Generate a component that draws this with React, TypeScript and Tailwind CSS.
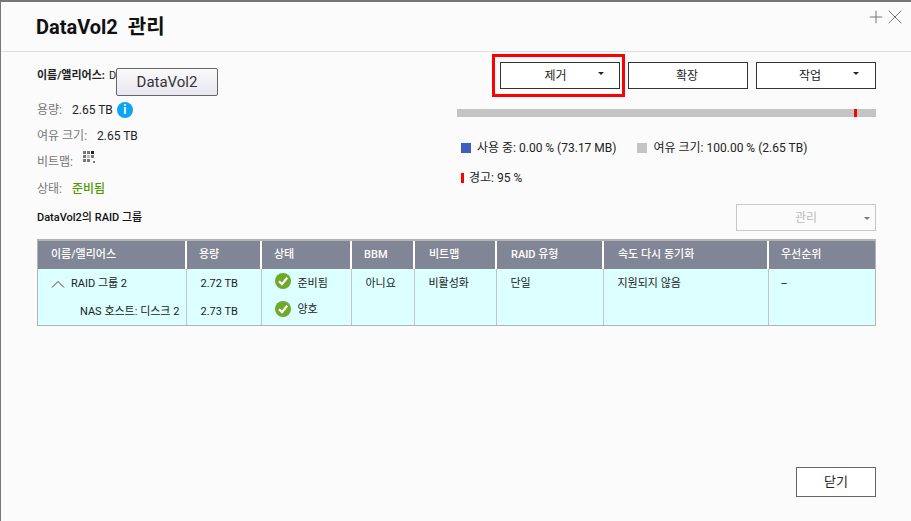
import { Plus, X } from 'lucide-react';

const font = { fontFamily: 'Roboto, "Noto Sans CJK KR", sans-serif' };

function Caret({ className = 'border-t-[#222]' }: { className?: string }) {
  return <span className={`inline-block w-0 h-0 border-x-[3px] border-x-transparent border-t-[3px] ${className}`} />;
}

function CheckIcon({ className }: { className: string }) {
  return (
    <svg width="16" height="16" viewBox="0 0 16 16" className={`shrink-0 ${className}`}>
      <circle cx="8" cy="8" r="8" fill="#6fa92a" />
      <path d="M4 8.2 L7 11.2 L12.2 4.8" fill="none" stroke="#fff" strokeWidth="2.2" />
    </svg>
  );
}

function BitmapIcon() {
  return (
    <svg width="13" height="13" viewBox="0 0 13 13">
      <g fill="#777">
        <rect x="0" y="0" width="3" height="3" />
        <rect x="4" y="0" width="3" height="3" />
        <rect x="0" y="4" width="3" height="3" />
        <rect x="0" y="8" width="3" height="3" />
        <rect x="4" y="8" width="3" height="3" />
        <rect x="8" y="4" width="3" height="3" />
        <rect x="10" y="10" width="2" height="2" />
      </g>
      <rect x="8" y="0" width="3" height="3" fill="#222" />
      <rect x="4" y="4" width="3" height="3" fill="#bbb" />
    </svg>
  );
}

function Info({ label, value, top }: { label: string; value: React.ReactNode; top: string }) {
  return (
    <div className={`flex items-center h-[26px] ${top}`}>
      <span className="text-[#777] mr-2.5">{label}</span>
      {value}
    </div>
  );
}

const headers = [
  ['이름/앨리어스', 'w-[148px] pl-[13px]'],
  ['용량', 'w-[75px] pl-[12px]'],
  ['상태', 'w-[90px] pl-[12px]'],
  ['BBM', 'w-[63px] pl-[12px]'],
  ['비트맵', 'w-[82px] pl-[14px]'],
  ['RAID 유형', 'w-[107px] pl-[14px]'],
  ['속도 다시 동기화', 'w-[165px] pl-[14px]'],
  ['우선순위', 'pl-[12px]'],
];

export default function App() {
  return (
    <div style={font} className="w-[911px] h-[521px] flex flex-col bg-[#fbfbfb] border-t-2 border-l border-[#777] text-[11px] text-[#222] overflow-hidden">
      {/* 헤더 */}
      <div className="h-[50px] shrink-0 border-b border-[#ddd] flex justify-between pl-[35px] pr-[4px]">
        <h1 className="text-[20px] leading-[28px] font-bold text-[#111] pt-[11px] h-full whitespace-pre">DataVol2  관리</h1>
        <div className="flex items-center h-[29px] text-[#777]">
          <Plus size={20} strokeWidth={1.2} />
          <X size={24} strokeWidth={1} className="-ml-[3px]" />
        </div>
      </div>

      <div className="flex pl-[36px] pr-[35px]">
        {/* 왼쪽 정보 */}
        <div className="w-[420px] pt-[12px] text-[12px] relative">
          <div className="flex items-center h-[24px] text-[11px]">
            <span className="font-bold text-[11px]">이름/앨리어스:</span>
            <span className="ml-[4px]">D</span>
            <div className="absolute left-[79px] top-[16px] w-[102px] h-[28px] flex items-center justify-center rounded-[2px] border border-[#666] bg-linear-to-b from-[#fafafa] to-[#e8e6f0] text-[15px] text-[#333]">
              DataVol2
            </div>
          </div>
          <Info top="mt-[9px]" label="용량:" value={<span className="flex items-center gap-[4px] text-[12px]">2.65 TB <span className="w-4 h-4 rounded-full bg-[#0aa5f5] text-white text-[12px] font-bold flex items-center justify-center">i</span></span>} />
          <Info top="" label="여유 크기:" value={<span>2.65 TB</span>} />
          <Info top="" label="비트맵:" value={<span className="-mt-[10px]"><BitmapIcon /></span>} />
          <Info top="mt-[1px]" label="상태:" value={<span className="text-[#4f9a00] font-medium">준비됨</span>} />
        </div>

        {/* 오른쪽 사용량 */}
        <div className="w-[419px] flex flex-col pt-[2px]">
          <div className="flex justify-end items-center h-[43px]">
            <div className="border-[3px] border-[#f00] p-[5px] pl-[5px] pr-[2px] -mr-[5px] flex">
              <button className="relative w-[120px] h-[27px] bg-white border border-[#333] text-[12px] pr-[9px]">
                제거
                <span className="absolute right-[15px] top-[9px] flex"><Caret /></span>
              </button>
            </div>
            <button className="ml-[8px] w-[120px] h-[27px] bg-white border border-[#333] text-[12px] pr-[2px]">확장</button>
            <button className="relative ml-[8px] w-[120px] h-[27px] bg-white border border-[#333] text-[12px] pr-[12px]">
              작업
              <span className="absolute right-[16px] top-[9px] flex"><Caret /></span>
            </button>
          </div>
          <div className="relative h-[8px] mt-[12px] bg-[#c4c4c4]">
            <div className="absolute left-[397px] top-0 w-[3px] h-full bg-[#f00]" />
          </div>
          <div className="flex items-center mt-[23px] h-[16px] pl-[4px] text-[12px]">
            <span className="w-[10px] h-[10px] bg-[#3f5fbf] mr-[6px]" />
            <span>사용 중: 0.00 % (73.17 MB)</span>
            <span className="w-[10px] h-[10px] bg-[#c4c4c4] ml-[21px] mr-[6px]" />
            <span>여유 크기: 100.00 % (2.65 TB)</span>
          </div>
          <div className="flex items-center mt-[14px] h-[16px] pl-[4px] text-[12px]">
            <span className="w-[3px] h-[10px] bg-[#f00] mr-[5px]" />
            <span>경고: 95 %</span>
          </div>
        </div>
      </div>

      <div className="flex items-end justify-between pl-[36px] pr-[35px] mt-[2px]">
        <span className="font-medium pb-[5px] text-[11px] text-[#111]">DataVol2의 RAID 그룹</span>
        <button className="relative w-[140px] h-[27px] border border-[#c8c8c8] text-[#bbb] text-[12px] bg-[#fbfbfb]">
          관리
          <span className="absolute right-[5px] top-[12px] flex"><Caret className="border-t-[#777]" /></span>
        </button>
      </div>

      {/* RAID 그룹 테이블 */}
      <div className="ml-[36px] mr-[35px] mt-[8px] border-t-2 border-b border-x border-[#b4b4b8]">
        <table className="w-full table-fixed border-collapse text-[11px]">
          <thead>
            <tr className="h-[28px] bg-[#808696] text-white">
              {headers.map(([h, c], i) => (
                <th key={h} className={`${c} text-left font-medium ${i < 7 ? 'border-r-2 border-white' : ''}`}>{h}</th>
              ))}
            </tr>
          </thead>
          <tbody className="bg-[#dcffff]">
            <tr className="h-[28px]">
              <td className="pt-[2px] border-r border-[#c4c4c4]">
                <div className="flex items-center pl-[13px] gap-[6px]">
                  <svg width="14" height="8" viewBox="0 0 14 8" fill="none" stroke="#633" strokeWidth="1">
                    <path d="M1 7.5 L7 1.5 L13 7.5" />
                  </svg>
                  RAID 그룹 2
                </div>
              </td>
              <td className="pt-[2px] pl-[14px] border-r border-[#c4c4c4]">2.72 TB</td>
              <td className="pt-[2px] pl-[13px] border-r border-[#c4c4c4]"><div className="flex items-center gap-[7px]"><CheckIcon className="mb-[6px]" />준비됨</div></td>
              <td className="pt-[2px] pl-[14px] border-r border-[#c4c4c4]">아니요</td>
              <td className="pt-[2px] pl-[14px] border-r border-[#c4c4c4]">비활성화</td>
              <td className="pt-[2px] pl-[14px] border-r border-[#c4c4c4]">단일</td>
              <td className="pt-[2px] pl-[14px] border-r border-[#c4c4c4]">지원되지 않음</td>
              <td className="pt-[2px] pl-[12px]">–</td>
            </tr>
            <tr className="h-[28px]">
              <td className="pt-[2px] pl-[42px] border-r border-[#c4c4c4]">NAS 호스트: 디스크 2</td>
              <td className="pt-[2px] pl-[14px] border-r border-[#c4c4c4]">2.73 TB</td>
              <td className="pt-[2px] pl-[13px] border-r border-[#c4c4c4]"><div className="flex items-center gap-[7px] -mt-[4px]"><CheckIcon className="mb-[2px]" />양호</div></td>
              <td className="border-r border-[#c4c4c4]" />
              <td className="border-r border-[#c4c4c4]" />
              <td className="border-r border-[#c4c4c4]" />
              <td className="border-r border-[#c4c4c4]" />
              <td />
            </tr>
          </tbody>
        </table>
      </div>

      <div className="flex justify-end pr-[35px] mt-[141px]">
        <button className="w-[80px] h-[30px] bg-white border border-[#666] text-[13px]">닫기</button>
      </div>
    </div>
  );
}
